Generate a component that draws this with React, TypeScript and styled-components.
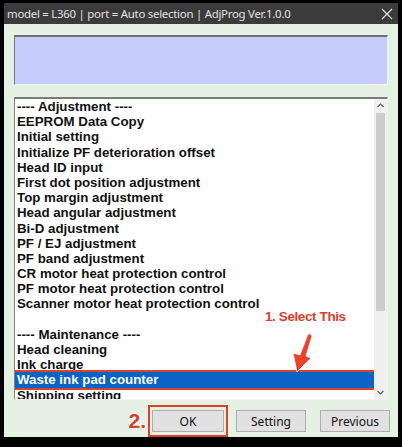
import React from 'react'
import styled, { createGlobalStyle } from 'styled-components'

const GlobalStyle = createGlobalStyle`
  html, body {
    margin: 0;
    padding: 0;
    background: #000;
  }
`

const StyledFrame = styled.div`
  width: 402px;
  height: 447px;
  box-sizing: border-box;
  padding: 3px 4px 11px 4px;
  background-color: #000;
  display: flex;
  flex-direction: column;
`

const StyledTitleBar = styled.div`
  height: 21px;
  flex: none;
  display: flex;
  align-items: center;
  justify-content: space-between;
  padding: 0 5px 0 3px;
  background-color: #3b3b3b;
  color: #e2e2e2;
  font-family: 'Noto Sans', sans-serif;
  font-size: 11.4px;
  letter-spacing: -0.25px;
  white-space: nowrap;
`

const StyledBody = styled.div`
  flex: 1;
  display: flex;
  flex-direction: column;
  padding: 11px 8px 0 10px;
  background-color: #e5f1e3;
`

const StyledStatusBox = styled.div`
  height: 50px;
  margin-right: 2px;
  box-sizing: border-box;
  background-color: #c6cdfb;
  border-top: 2px solid #6e6e6e;
  border-left: 1px solid #7a7a7a;
  border-right: 1px solid #f4f4f4;
  border-bottom: 1px solid #f4f4f4;
`

const StyledListBox = styled.div`
  position: relative;
  margin-top: 12px;
  margin-right: 2px;
  height: 303px;
  box-sizing: border-box;
  display: flex;
  background-color: #fff;
  border-top: 2px solid #7a7a7a;
  border-left: 1px solid #828282;
  border-right: 1px solid #f4f4f4;
  border-bottom: 1px solid #f4f4f4;
`

const StyledItems = styled.div`
  flex: 1;
  overflow: hidden;
`

const StyledItem = styled.div<{ $selected?: boolean }>`
  height: 15.2px;
  line-height: 15.2px;
  padding-left: 2px;
  font-family: 'Liberation Sans', Arial, sans-serif;
  font-size: 13.3px;
  font-weight: 700;
  white-space: nowrap;
  color: ${({ $selected }) => ($selected ? '#fff' : '#111')};
  background-color: ${({ $selected }) => ($selected ? '#0a63c6' : 'transparent')};
  outline: ${({ $selected }) => ($selected ? '2px solid #d9432d' : 'none')};
  outline-offset: 0;
`

const StyledScrollbar = styled.div`
  width: 13px;
  flex: none;
  display: flex;
  flex-direction: column;
  background-color: #f0f0f0;
`

const StyledScrollArrow = styled.div`
  height: 13px;
  flex: none;
  display: flex;
  align-items: center;
  justify-content: center;
  color: #606060;
`

const StyledThumb = styled.div`
  height: 198px;
  margin: 1px 2px 0 2px;
  background-color: #cdcdcd;
`

const StyledTrack = styled.div`
  flex: 1;
`

const StyledNote = styled.div`
  position: absolute;
  left: 250px;
  top: 210px;
  font-family: 'Liberation Sans', Arial, sans-serif;
  font-size: 13.5px;
  font-weight: 700;
  letter-spacing: -0.4px;
  color: #d8402a;
  text-shadow: 0 0 2px #fff, 0 0 2px #fff, 0 0 3px #fff;
  white-space: nowrap;
`

const StyledArrow = styled.svg`
  position: absolute;
  left: 270px;
  top: 234px;
`

const StyledButtonRow = styled.div`
  display: flex;
  align-items: center;
  justify-content: flex-end;
  margin-top: 5px;
`

const StyledStep = styled.div`
  margin-right: 2px;
  font-family: 'Liberation Sans', Arial, sans-serif;
  font-size: 21px;
  font-weight: 700;
  color: #d8402a;
  text-shadow: 0 0 2px #fff, 0 0 2px #fff, 0 0 3px #fff;
`

const StyledHighlight = styled.div`
  padding: 3px 2px;
  border: 2px solid #d9432d;
  margin-right: 8px;
`

const StyledButton = styled.button<{ $width?: number }>`
  width: ${({ $width }) => $width ?? 70}px;
  height: 22px;
  padding: 0;
  margin: 0;
  box-sizing: border-box;
  background-color: #e1e1e1;
  border: 1px solid #adadad;
  font-family: 'Noto Sans', sans-serif;
  font-size: 12px;
  color: #111;
`

const StyledGap = styled.div`
  width: 14px;
`

const ITEMS = [
  '---- Adjustment ----',
  'EEPROM Data Copy',
  'Initial setting',
  'Initialize PF deterioration offset',
  'Head ID input',
  'First dot position adjustment',
  'Top margin adjustment',
  'Head angular adjustment',
  'Bi-D adjustment',
  'PF / EJ adjustment',
  'PF band adjustment',
  'CR motor heat protection control',
  'PF motor heat protection control',
  'Scanner motor heat protection control',
  '',
  '---- Maintenance ----',
  'Head cleaning',
  'Ink charge',
  'Waste ink pad counter',
  'Shipping setting',
]

const SELECTED = 'Waste ink pad counter'

const Chevron: React.FC<{ up?: boolean }> = ({ up }) => (
  <svg width="7" height="5" viewBox="0 0 7 5">
    <path
      d={up ? 'M0.5 4 L3.5 1 L6.5 4' : 'M0.5 1 L3.5 4 L6.5 1'}
      fill="none"
      stroke="currentColor"
      strokeWidth="1.2"
    />
  </svg>
)

export default function App() {
  return (
    <StyledFrame>
      <GlobalStyle />
      <StyledTitleBar>
        <span>model = L360 | port = Auto selection | AdjProg Ver.1.0.0</span>
        <svg width="12" height="12" viewBox="0 0 12 12">
          <path d="M1 1 L11 11 M11 1 L1 11" stroke="#e2e2e2" strokeWidth="1.2" />
        </svg>
      </StyledTitleBar>
      <StyledBody>
        <StyledStatusBox />
        <StyledListBox>
          <StyledItems>
            {ITEMS.map((item, i) => (
              <StyledItem key={i} $selected={item === SELECTED}>
                {item || '\u00a0'}
              </StyledItem>
            ))}
          </StyledItems>
          <StyledScrollbar>
            <StyledScrollArrow>
              <Chevron up />
            </StyledScrollArrow>
            <StyledThumb />
            <StyledTrack />
            <StyledScrollArrow>
              <Chevron />
            </StyledScrollArrow>
          </StyledScrollbar>
          <StyledNote>1. Select This</StyledNote>
          <StyledArrow width="30" height="40" viewBox="0 0 30 40">
            <path
              d="M23 1 Q26 0 27 3 L21 23 L26 25 L12 39 L8 20 L15 22 Z"
              fill="#e8412c"
              stroke="#fff"
              strokeWidth="0.8"
              strokeLinejoin="round"
            />
          </StyledArrow>
        </StyledListBox>
        <StyledButtonRow>
          <StyledStep>2.</StyledStep>
          <StyledHighlight>
            <StyledButton $width={72}>OK</StyledButton>
          </StyledHighlight>
          <StyledButton>Setting</StyledButton>
          <StyledGap />
          <StyledButton>Previous</StyledButton>
        </StyledButtonRow>
      </StyledBody>
    </StyledFrame>
  )
}
